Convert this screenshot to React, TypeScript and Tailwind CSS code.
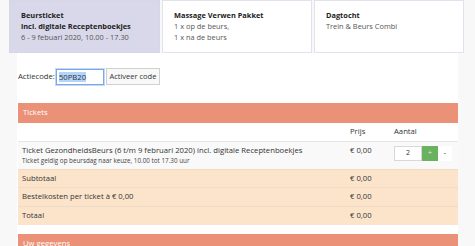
const cards = [
  {
    title: "Beursticket",
    lines: ["incl. digitale Receptenboekjes"],
    sub: ["6 - 9 febuari 2020, 10.00 - 17.30"],
    active: true,
  },
  { title: "Massage Verwen Pakket", lines: [], sub: ["1 x op de beurs,", "1 x na de beurs"], active: false },
  { title: "Dagtocht", lines: [], sub: ["Trein & Beurs Combi"], active: false },
];

const totals = [
  { label: "Subtotaal", h: "h-[18px]" },
  { label: "Bestelkosten per ticket à € 0,00", h: "h-[19px]" },
  { label: "Totaal", h: "h-[19px]" },
];

export default function App() {
  return (
    <div className="h-[246px] w-[475px] overflow-hidden bg-[#f8f8f8] font-['Open_Sans',sans-serif] text-[7.7px] text-[#333]">
      <div className="grid grid-cols-[151px_150px_150px] gap-[2px] pl-[9px] text-[7.4px]">
        {cards.map((card) => (
          <div
            key={card.title}
            className={`h-[53px] border px-[11px] pt-[9px] leading-[11px] ${
              card.active ? "border-[#d6d6e8] bg-[#d8d8ea]" : "border-[#e2e2ee] bg-white"
            }`}
          >
            <p className="font-bold text-[#222]">{card.title}</p>
            {card.lines.map((l) => (
              <p key={l} className="font-bold text-[#222]">
                {l}
              </p>
            ))}
            {card.sub.map((l) => (
              <p key={l} className="text-[#555]">
                {l}
              </p>
            ))}
          </div>
        ))}
      </div>

      <div className="mx-[17px] bg-white pl-px">
        <div className="flex items-center pt-[15px] pb-[18px]">
          <span>Actiecode:</span>
          <span className="ml-px flex h-[16px] w-[48px] items-center border border-[#7aa7e8] px-[2px] shadow-[0_0_0_1px_#c4d8f6]">
            <span className="bg-[#b3d4fc] leading-[10px]">50PB20</span>
          </span>
          <button className="ml-[2px] h-[17px] w-[54px] border border-[#d0d0d0] bg-[#f8f8f8] text-[7.5px] leading-none">
            Activeer code
          </button>
        </div>

        <div className="flex h-[20px] items-center bg-[#ea9178] px-[5px] text-white">Tickets</div>

        <div className="flex h-[18px] items-end pb-[3px] text-[#333]">
          <span className="w-[332px]" />
          <span className="w-[44px]">Prijs</span>
          <span>Aantal</span>
        </div>
        <div className="flex h-[28px] border-t border-[#e6e6e6] bg-[#f9f9f9] pt-[3px]">
          <div className="w-[332px] pl-[4px]">
            <p className="leading-[11px]">
              Ticket GezondheidsBeurs (6 t/m 9 februari 2020) incl. digitale Receptenboekjes
            </p>
            <p className="text-[6.3px] leading-[9px] text-[#444]">
              Ticket geldig op beursdag naar keuze, 10.00 tot 17.30 uur
            </p>
          </div>
          <span className="w-[44px] leading-[11px]">€ 0,00</span>
          <div className="mt-[1px] flex h-[15px]">
            <span className="flex w-[28px] items-center justify-center border border-[#d8d8d8] bg-white text-[7px]">
              2
            </span>
            <span className="flex w-[16px] items-center justify-center bg-[#6ab25f] text-[7px] text-[#dff0dc]">
              +
            </span>
            <span className="flex w-[14px] items-center justify-center bg-white text-[7px]">-</span>
          </div>
        </div>
        {totals.map((t) => (
          <div key={t.label} className={`flex ${t.h} items-center border-t border-[#f0dcc6] bg-[#fce4cb] pl-[4px]`}>
            <span className="w-[328px]">{t.label}</span>
            <span>€ 0,00</span>
          </div>
        ))}
        <div className="h-[9px]" />
        <div className="flex h-[20px] items-center bg-[#ea9178] px-[5px] text-white">Uw gegevens</div>
      </div>
    </div>
  );
}
